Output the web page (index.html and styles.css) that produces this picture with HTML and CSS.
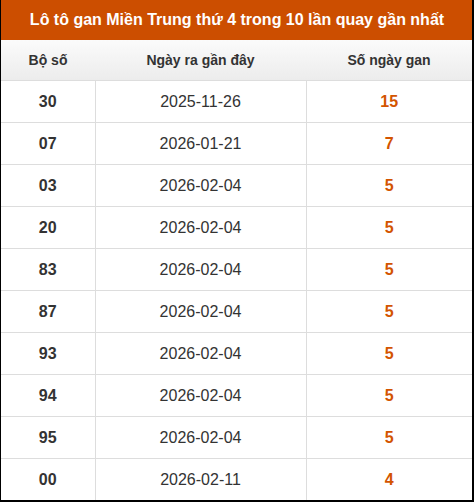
FILE: index.html
```html
<!DOCTYPE html>
<html lang="vi">
<head>
<meta charset="utf-8">
<link rel="stylesheet" href="styles.css">
</head>
<body>
<div class="box">
  <div class="title">Lô tô gan Miền Trung thứ 4 trong 10 lần quay gần nhất</div>
  <table class="tbl">
    <colgroup><col class="c1"><col class="c2"><col class="c3"></colgroup>
    <thead>
      <tr><th>Bộ số</th><th>Ngày ra gần đây</th><th>Số ngày gan</th></tr>
    </thead>
    <tbody>
      <tr><td class="num">30</td><td class="date">2025-11-26</td><td class="gan">15</td></tr>
      <tr><td class="num">07</td><td class="date">2026-01-21</td><td class="gan">7</td></tr>
      <tr><td class="num">03</td><td class="date">2026-02-04</td><td class="gan">5</td></tr>
      <tr><td class="num">20</td><td class="date">2026-02-04</td><td class="gan">5</td></tr>
      <tr><td class="num">83</td><td class="date">2026-02-04</td><td class="gan">5</td></tr>
      <tr><td class="num">87</td><td class="date">2026-02-04</td><td class="gan">5</td></tr>
      <tr><td class="num">93</td><td class="date">2026-02-04</td><td class="gan">5</td></tr>
      <tr><td class="num">94</td><td class="date">2026-02-04</td><td class="gan">5</td></tr>
      <tr><td class="num">95</td><td class="date">2026-02-04</td><td class="gan">5</td></tr>
      <tr><td class="num">00</td><td class="date">2026-02-11</td><td class="gan">4</td></tr>
    </tbody>
  </table>
</div>
</body>
</html>
```
FILE: styles.css
```css
html, body { margin: 0; padding: 0; background: #fff; }
body { font-family: "Liberation Sans", Arial, sans-serif; color: #333; }
.box {
  width: 474px;
  height: 502px;
  box-sizing: border-box;
  border-left: 1px solid #000;
  border-right: 2px solid #000;
  border-bottom: 2px solid #000;
  overflow: hidden;
}
.title {
  height: 40px;
  margin-left: -1px;
  margin-right: -2px;
  background: #cc4e00;
  color: #fff;
  font-weight: bold;
  font-size: 16px;
  line-height: 40px;
  text-align: center;
}
.tbl {
  width: 100%;
  border-collapse: collapse;
  table-layout: fixed;
}
.c1 { width: 94px; }
.c2 { width: 211px; }
.tbl th {
  height: 40px;
  padding: 0;
  background: linear-gradient(#fbfbfb, #ececec);
  font-size: 14px;
  font-weight: bold;
  color: #333;
  border-bottom: 1px solid #ddd;
  text-align: center;
}
.tbl td {
  height: 41px;
  padding: 0;
  text-align: center;
  border-top: 1px solid #ddd;
  border-left: 1px solid #ddd;
  font-size: 16px;
}
.tbl tbody tr:first-child td { border-top: none; height: 41px; }
.tbl td:first-child { border-left: none; }
.num { font-weight: bold; color: #333; }
.date { color: #333; }
.gan { font-weight: bold; color: #d35400; font-size: 17px; padding-left: 4px; }
```
